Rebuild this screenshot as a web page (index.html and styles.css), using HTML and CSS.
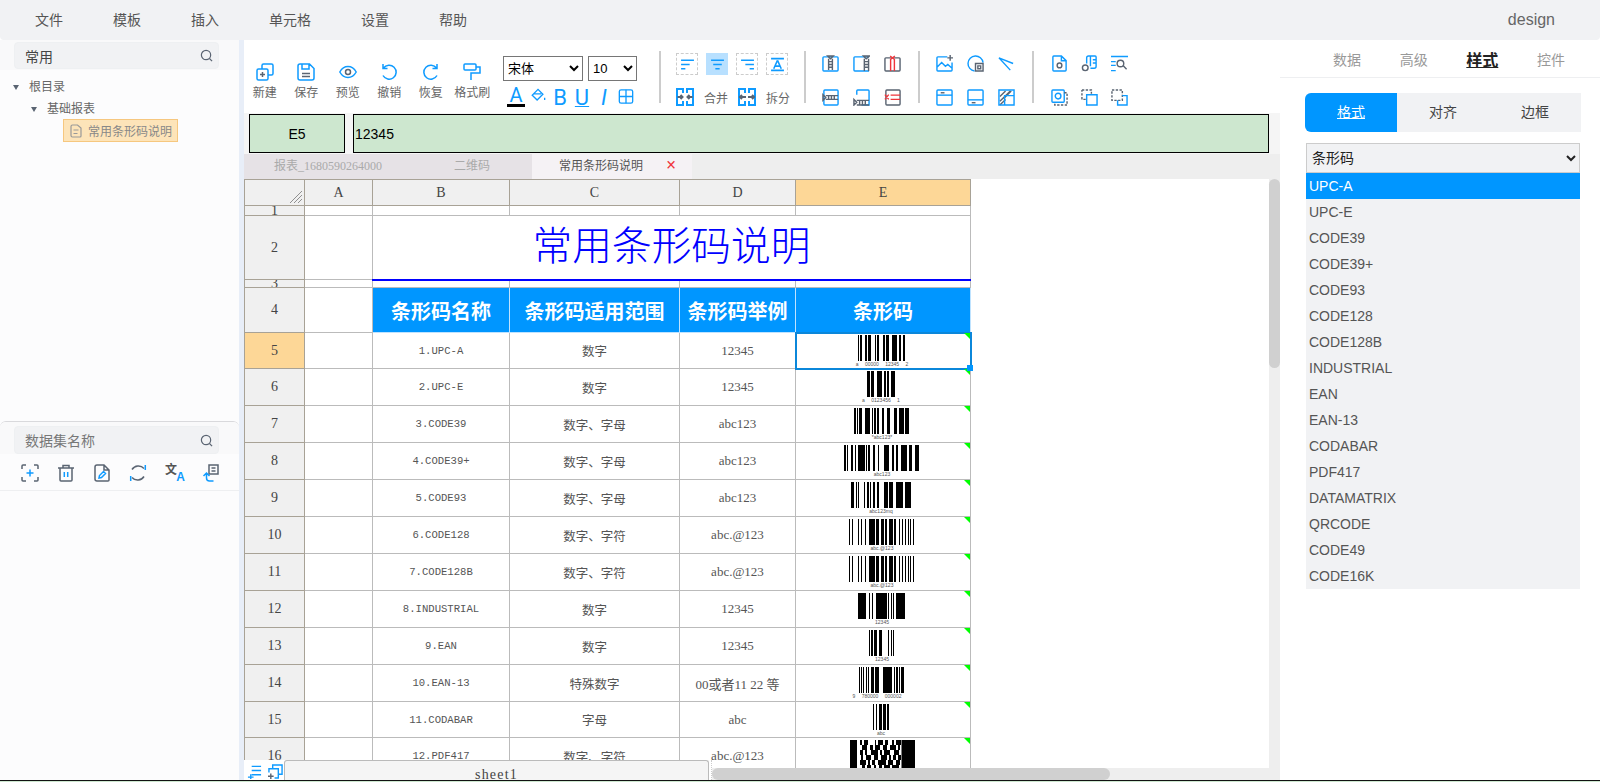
FILE: index.html
```html
<!DOCTYPE html>
<html lang="zh-CN">
<head>
  <meta charset="UTF-8" />
  <meta name="viewport" content="width=device-width, initial-scale=1.0"/>
  <title>报表设计</title>
  <link rel="stylesheet" href="styles.css">
</head>
<body>
  <div class="app">
    <header class="topbar">
      <nav class="menu">
        <span>文件</span><span>模板</span><span>插入</span><span>单元格</span><span>设置</span><span>帮助</span>
      </nav>
      <span class="user">design</span>
    </header>

    <div class="workspace">
      <aside class="left">
        <section class="tree-panel">
          <div class="search-row">
            <div class="search-box"><span class="search-value">常用</span>
              <svg class="search-ic" viewBox="0 0 14 14"><circle cx="6.5" cy="6.5" r="5"/><path d="M10.2 10.2 13 13"/></svg>
            </div>
          </div>
          <ul class="tree">
            <li class="tree-root"><i class="caret"></i>根目录</li>
            <li class="tree-folder"><i class="caret"></i>基础报表</li>
            <li class="tree-file">
              <svg class="file-ic" viewBox="0 0 12 14"><path d="M2.5 1h5L11 4v8a1 1 0 0 1-1 1H2.500a1.500 1.500 0 0 1-1.500-1.500v-9A1.500 1.500 0 0 1 2.500 1zM3.500 6h5M3.500 9.500h4"/></svg>
              常用条形码说明
            </li>
          </ul>
        </section>
        <section class="data-panel">
          <div class="search-row data-search">
            <div class="search-box"><span class="search-hint">数据集名称</span>
              <svg class="search-ic" viewBox="0 0 14 14"><circle cx="6.5" cy="6.5" r="5"/><path d="M10.200 10.200 13 13"/></svg>
            </div>
          </div>
          <div class="data-tools">
            <svg class="ic" viewBox="0 0 18 18"><path class="g" d="M1 5V2a1 1 0 0 1 1-1h3M13 1h3a1 1 0 0 1 1 1v3M17 13v3a1 1 0 0 1-1 1h-3M5 17H2a1 1 0 0 1-1-1v-3"/><path d="M9 5.500v7M5.500 9h7"/></svg>
            <svg class="ic" viewBox="0 0 18 18"><path class="g" d="M1 4h16M6 4V1.500h6V4M3 4v12a1 1 0 0 0 1 1h10a1 1 0 0 0 1-1V4"/><path d="M7.300 8v5M10.700 8v5"/></svg>
            <svg class="ic" viewBox="0 0 18 18"><path class="g" d="M4 1h7l5 5v10a1 1 0 0 1-1 1H4a2 2 0 0 1-2-2V3a2 2 0 0 1 2-2zM11 1v5h5"/><path d="m6 14 .5-2.500 4-4 2 2-4 4z"/></svg>
            <svg class="ic" viewBox="0 0 18 18"><path class="g" d="M3 5.500A7.500 7.500 0 0 1 15 4.500M15 12.500A7.500 7.500 0 0 1 3 13.500"/><path d="M16.300 1v5M1.700 12v5"/></svg>
            <span class="translate"><b>文</b><em>A</em></span>
            <svg class="ic" viewBox="0 0 18 18"><path class="g" d="M8 1h9v9H8zM10.500 4h4M10.500 7h4"/><path d="M5.500 9.500v4.500a3 3 0 0 0 3 3h4M2.500 12l3-3 3 3"/></svg>
          </div>
        </section>
      </aside>
      <div class="strip"></div>

      <main class="main">
        <div class="toolbar">
          <div class="tool">
            <svg class="ic" viewBox="0 0 18 18"><rect x="1" y="6" width="11" height="11" rx="1.500"/><path class="g" d="M6.500 9v5M4 11.500h5"/><path d="M6 6V2.500A1.500 1.500 0 0 1 7.500 1h8A1.500 1.500 0 0 1 17 2.500v8a1.500 1.500 0 0 1-1.500 1.500H12"/></svg>
            <span>新建</span>
          </div>
          <div class="tool">
            <svg class="ic" viewBox="0 0 18 18"><path d="M3 1h9.500L17 5.500V15a2 2 0 0 1-2 2H3a2 2 0 0 1-2-2V3a2 2 0 0 1 2-2zM5 1v5h7V1"/><path class="g" d="M5 10.500h8M5 13.500h8"/></svg>
            <span>保存</span>
          </div>
          <div class="tool">
            <svg class="ic" viewBox="0 0 18 18"><path d="M.8 9C3 5 5.800 3.500 9 3.500S15 5 17.200 9C15 13 12.200 14.500 9 14.500S3 13 .8 9z"/><circle class="g" cx="9" cy="9" r="2.500"/></svg>
            <span>预览</span>
          </div>
          <div class="tool">
            <svg class="ic" viewBox="0 0 18 18"><path d="M3.500 5a7 7 0 1 1-.5 7.500M3 1v4.500h4.500"/></svg>
            <span>撤销</span>
          </div>
          <div class="tool">
            <svg class="ic" viewBox="0 0 18 18"><path d="M14.500 5a7 7 0 1 0 .5 7.500M15 1v4.500h-4.500"/></svg>
            <span>恢复</span>
          </div>
          <div class="tool">
            <svg class="ic" viewBox="0 0 18 18"><rect x="1" y="1" width="12" height="6" rx="1"/><path d="M13 4h4v6H8v7"/></svg>
            <span>格式刷</span>
          </div>

          <div class="font-group">
            <div class="font-selects">
              <select class="font-name"><option>宋体</option></select>
              <select class="font-size"><option>10</option></select>
            </div>
            <div class="font-styles">
              <span class="style-btn style-color">A</span>
              <svg class="ic style-ic" viewBox="0 0 18 18"><path d="M9 1 2.500 7.500 8 13l6.500-6.500zM4.500 6h8"/><path d="M16.500 10.500v2.500"/></svg>
              <span class="style-btn">B</span>
              <span class="style-btn style-under">U</span>
              <span class="style-btn style-italic">I</span>
              <svg class="ic style-ic" viewBox="0 0 18 18"><rect x="1.500" y="1.500" width="15" height="15" rx="2"/><path d="M9 1.500v15M1.500 9h15"/></svg>
            </div>
          </div>

          <i class="sep sep-a"></i>

          <div class="align-group">
            <div class="align-row">
              <span class="align-btn"><svg class="ic" viewBox="0 0 14 14"><path d="M1 3h12M1 7h8M1 11h4"/></svg></span>
              <span class="align-btn is-on"><svg class="ic" viewBox="0 0 14 14"><path d="M1 3h12M3 7h8M5 11h4"/></svg></span>
              <span class="align-btn"><svg class="ic" viewBox="0 0 14 14"><path d="M1 3h12M5 7h8M9 11h4"/></svg></span>
              <span class="align-btn"><svg class="ic" viewBox="0 0 14 14"><path d="M1 1.500h12M1 12.500h12M7 3 3.500 11M7 3l3.500 8M4.500 8.500h5"/></svg></span>
            </div>
            <div class="merge-row">
              <svg class="ic ic-heavy" viewBox="0 0 18 18"><path d="M7 5V1H1v16h6v-4M11 5V1h6v16h-6v-4"/><path class="g" d="M1.500 9h5M16.500 9h-5M4.500 7l2 2-2 2M13.500 7l-2 2 2 2"/></svg>
              <span class="merge-label">合并</span>
              <svg class="ic ic-heavy" viewBox="0 0 18 18"><path d="M7 5V1H1v16h6v-4M11 5V1h6v16h-6v-4"/><path class="g" d="M2 9h6M16 9h-6M4 7 2 9l2 2M14 7l2 2-2 2"/></svg>
              <span class="merge-label">拆分</span>
            </div>
          </div>

          <i class="sep sep-b"></i>

          <div class="icon-grid">
            <svg class="ic" viewBox="0 0 18 18"><rect x="1" y="2" width="16" height="15" rx="1"/><path class="g" d="M7 4v12M11 4v12M7 7h4M7 10h4M7 13h4M6 1h6L9 4z"/></svg>
            <svg class="ic" viewBox="0 0 18 18"><path d="M17 2H2a1 1 0 0 0-1 1v13a1 1 0 0 0 1 1h15"/><path class="g" d="M12 4v13M16.500 4v13M12 7h4.500M12 10h4.500M12 13h4.500M11 1h6.500L14 4z"/></svg>
            <svg class="ic" viewBox="0 0 18 18"><rect class="g" x="1" y="3" width="16" height="14" rx="1"/><path class="r" d="M7 5v12M11 5v12M6.500 1l5 4M11.500 1l-5 4"/></svg>
            <svg class="ic" viewBox="0 0 18 18"><rect x="2" y="1" width="15" height="16" rx="1"/><path class="g" d="M4 7h13M4 11h13M7 7v4M10 7v4M13 7v4M1 6v6l3-3z"/></svg>
            <svg class="ic" viewBox="0 0 18 18"><path d="M4 6V2a1 1 0 0 1 1-1h11a1 1 0 0 1 1 1v15H9"/><path class="g" d="M4 12h13M4 17h13M7 12v5M10 12v5M13 12v5M1 11v6l3-3z"/></svg>
            <svg class="ic" viewBox="0 0 18 18"><rect class="g" x="2" y="1" width="15" height="16" rx="1"/><path class="r" d="M7 6.500h10M7 11h10M1 6l4 5M5 6l-4 5"/></svg>
          </div>

          <i class="sep sep-c"></i>

          <div class="icon-grid">
            <svg class="ic" viewBox="0 0 18 18"><path d="M12 2H2a1 1 0 0 0-1 1v13a1 1 0 0 0 1 1h14a1 1 0 0 0 1-1V8M1 13l5-5 4 4 2.500-2 4.500 4"/><path class="g" d="M15 0v6M12 3h6"/></svg>
            <svg class="ic" viewBox="0 0 18 18"><path d="M8 17A8 8 0 1 1 17 8"/><path class="g" d="M9 9h8v8H9zM11.500 11.500h3v3h-3z"/></svg>
            <svg class="ic" viewBox="0 0 18 18"><path d="M1 3 16 9M1 3l12 13"/></svg>
            <svg class="ic" viewBox="0 0 18 18"><rect x="1" y="1" width="16" height="16" rx="1"/><path d="M1 6.500h16"/><path class="g" d="M5 4h4"/></svg>
            <svg class="ic" viewBox="0 0 18 18"><rect x="1" y="1" width="16" height="16" rx="1"/><path d="M1 11.500h16"/><path class="g" d="M5 14.500h4"/></svg>
            <svg class="ic" viewBox="0 0 18 18"><path class="g" d="M2 8 8 2M2 13 13 2M6 10l8-8M2 17l6-6"/><path d="M1 1h16v16H1zM7 7h10v10H7z"/></svg>
          </div>

          <i class="sep sep-d"></i>

          <div class="icon-grid grid-page">
            <svg class="ic" viewBox="0 0 18 18"><path d="M3 1h8l5 5v10a1 1 0 0 1-1 1H3a1 1 0 0 1-1-1V2a1 1 0 0 1 1-1zM11 1v5h5"/><circle class="g" cx="9" cy="11" r="2.500"/></svg>
            <svg class="ic" viewBox="0 0 18 18"><path d="M6 9V3a2 2 0 0 1 2-2h7a1 1 0 0 1 1 1v10a2 2 0 0 1-2 2h-4M10 1v11M12.500 5h3M12.500 8.500h3"/><circle class="g" cx="4.500" cy="13.500" r="3"/></svg>
            <svg class="ic" viewBox="0 0 18 18"><path d="M0 1.500h18M0 7h5M0 11h5M0 16.500h5"/><circle class="g" cx="10" cy="9" r="3.500"/><path class="g" d="m13 11.500 3.500 3.500"/></svg>
            <svg class="ic" viewBox="0 0 18 18"><rect x="1" y="1" width="13" height="13" rx="1"/><circle cx="7.500" cy="7.500" r="3"/><path class="g dash" d="M14 4h3v13H4v-3"/></svg>
            <svg class="ic" viewBox="0 0 18 18"><path class="g dash" d="M1 1h10v4M5 11H1V1"/><path d="M6 6h11v11H6z"/></svg>
            <svg class="ic" viewBox="0 0 18 18"><path class="g dash" d="M1 1h11v11H1z"/><path d="M12 7h5v10H7v-5"/></svg>
          </div>
        </div>

        <div class="formula">
          <div class="formula-box cell-name">E5</div>
          <div class="formula-box cell-value">12345</div>
        </div>

        <div class="doc-tabs">
          <span class="doc-tab tab-wide">报表_1680590264000</span>
          <span class="doc-tab tab-small">二维码</span>
          <span class="doc-tab tab-active">常用条形码说明<i class="tab-close">×</i></span>
        </div>

        <div class="sheet">
          <div class="viewport">
            <table class="grid">
              <colgroup>
                <col class="c0"><col class="c1"><col class="c2"><col class="c3"><col class="c4"><col class="c5">
              </colgroup>
              <thead>
                <tr class="r-head">
                  <th class="corner-cell"><svg class="slashes" viewBox="0 0 14 14"><path d="M1 13 13 1M5 13 13 5M9 13l4-4"/></svg></th>
                  <th>A</th><th>B</th><th>C</th><th>D</th><th class="is-active">E</th>
                </tr>
              </thead>
              <tbody>
                <tr class="r-1"><th>1</th><td></td><td></td><td></td><td></td><td></td></tr>
                <tr class="r-2"><th>2</th><td></td><td colspan="4" class="title">常用条形码说明</td></tr>
                <tr class="r-3"><th>3</th><td></td><td class="rule"></td><td class="rule"></td><td class="rule"></td><td class="rule"></td></tr>
                <tr class="r-4"><th>4</th><td></td><td class="head-cell">条形码名称</td><td class="head-cell">条形码适用范围</td><td class="head-cell">条形码举例</td><td class="head-cell">条形码</td></tr>
                <tr class="r-5"><th class="is-active">5</th><td></td><td class="code">1.UPC-A</td><td>数字</td><td class="val">12345</td>
                  <td class="bar mark selected"><svg class="bc" width="47" height="33"><line x2="47" y1="13" y2="13" stroke-dasharray="1 1 2 3 2 1 3 4 1 1 2 4 2 1 3 3 5 2 2 2 2"/><text class="spread" x="24" y="31">a 00000 12345 2</text></svg><i class="handle"></i></td></tr>
                <tr class="r-6"><th>6</th><td></td><td class="code">2.UPC-E</td><td>数字</td><td class="val">12345</td>
                  <td class="bar mark"><svg class="bc" width="28" height="33"><line x2="28" y1="13" y2="13" stroke-dasharray="3 1 3 3 5 2 2 1 2 2 4"/><text class="spread" x="14" y="31">a 0123456 1</text></svg></td></tr>
                <tr class="r-7"><th>7</th><td></td><td class="code">3.CODE39</td><td>数字、字母</td><td class="val">abc123</td>
                  <td class="bar mark"><svg class="bc" width="55" height="33"><line x2="55" y1="13" y2="13" stroke-dasharray="2 1 1 1 3 3 5 2 1 1 2 1 2 3 2 3 3 4 3 2 5 1 4"/><text x="28" y="31">*abc123*</text></svg></td></tr>
                <tr class="r-7"><th>8</th><td></td><td class="code">4.CODE39+</td><td>数字、字母</td><td class="val">abc123</td>
                  <td class="bar mark"><svg class="bc" width="75" height="33"><line x2="75" y1="13" y2="13" stroke-dasharray="2 1 1 3 2 2 1 2 7 1 1 1 2 3 2 3 1 5 5 3 2 2 2 3 6 2 3 3 4"/><text x="38" y="31">abc123</text></svg></td></tr>
                <tr class="r-7"><th>9</th><td></td><td class="code">5.CODE93</td><td>数字、字母</td><td class="val">abc123</td>
                  <td class="bar mark"><svg class="bc" width="60" height="33"><line x2="60" y1="13" y2="13" stroke-dasharray="3 2 1 1 1 5 1 2 2 1 1 2 2 2 2 5 4 1 4 3 7 2 6"/><text x="30" y="31">abc123mq</text></svg></td></tr>
                <tr class="r-7"><th>10</th><td></td><td class="code">6.CODE128</td><td>数字、字符</td><td class="val">abc.@123</td>
                  <td class="bar mark"><svg class="bc" width="65" height="33"><line x2="65" y1="13" y2="13" stroke-dasharray="1 2 1 5 1 2 1 3 1 3 6 1 3 2 3 1 2 2 4 1 2 3 1 2 1 2 1 2 1 1 1 2 1"/><text x="33" y="31">abc.@123</text></svg></td></tr>
                <tr class="r-7"><th>11</th><td></td><td class="code">7.CODE128B</td><td>数字、字符</td><td class="val">abc.@123</td>
                  <td class="bar mark"><svg class="bc" width="65" height="33"><line x2="65" y1="13" y2="13" stroke-dasharray="1 2 1 5 1 2 1 3 1 3 6 1 3 2 3 1 2 2 4 1 2 3 1 2 1 2 1 2 1 1 1 2 1"/><text x="33" y="31">abc.@123</text></svg></td></tr>
                <tr class="r-7"><th>12</th><td></td><td class="code">8.INDUSTRIAL</td><td>数字</td><td class="val">12345</td>
                  <td class="bar mark"><svg class="bc" width="47" height="33"><line x2="47" y1="13" y2="13" stroke-dasharray="8 3 1 2 1 3 11 1 1 2 1 1 1 2 9"/><text x="24" y="31">12345</text></svg></td></tr>
                <tr class="r-7"><th>13</th><td></td><td class="code">9.EAN</td><td>数字</td><td class="val">12345</td>
                  <td class="bar mark"><svg class="bc" width="25" height="33"><line x2="25" y1="13" y2="13" stroke-dasharray="1 1 2 1 3 2 3 6 1 2 1 1 1"/><text x="13" y="31">12345</text></svg></td></tr>
                <tr class="r-7"><th>14</th><td></td><td class="code">10.EAN-13</td><td>特殊数字</td><td class="val">00或者11 22 等</td>
                  <td class="bar mark"><svg class="bc" width="45" height="33"><line x2="45" y1="13" y2="13" stroke-dasharray="1 1 1 1 1 2 1 1 1 2 3 1 4 4 9 2 1 1 2 1 1 1 3"/><text class="spread" x="18" y="31">9 780000 000002</text></svg></td></tr>
                <tr class="r-15"><th>15</th><td></td><td class="code">11.CODABAR</td><td>字母</td><td class="val">abc</td>
                  <td class="bar mark"><svg class="bc" width="16" height="33"><line x2="16" y1="13" y2="13" stroke-dasharray="1 2 1 2 3 1 3 1 2"/><text x="8" y="31">abc</text></svg></td></tr>
                <tr class="r-7"><th>16</th><td></td><td class="code">12.PDF417</td><td>数字、字符</td><td class="val">abc.@123</td>
                  <td class="bar mark">
                    <svg class="bc pdf" width="62" height="33" viewBox="0 0 62 33">
                      <path d="M3.500 0v33M55 0v33M61.500 0v33" class="pdf-rows"/>
                      <path d="M10 2.500h2M14 2.500h4M25 2.500h1M28 2.500h5M35 2.500h3M42 2.500h2M46 2.500h5M12 7.500h5M20 7.500h3M25 7.500h5M33 7.500h4M40 7.500h6M48 7.500h2M10 12.500h3M15 12.500h2M21 12.500h7M30 12.500h2M34 12.500h6M44 12.500h5M11 17.500h2M16 17.500h5M24 17.500h4M31 17.500h6M39 17.500h2M43 17.500h3M48 17.500h3M10 22.500h6M18 22.500h2M22 22.500h3M28 22.500h8M38 22.500h5M46 22.500h4M12 27.500h3M17 27.500h4M24 27.500h2M29 27.500h3M34 27.500h6M42 27.500h7"/>
                    </svg>
                  </td></tr>
              </tbody>
            </table>
          </div>
          <div class="vscroll"><i class="vthumb"></i></div>
          <div class="hscroll"><i class="hthumb"></i></div>

          <div class="sheet-bar">
            <svg class="ic sheet-ic" viewBox="0 0 16 16"><path d="M5 2.500h10M5 7h10M5 11.500h10M1 14h6M4 11v5"/></svg>
            <svg class="ic sheet-ic" viewBox="0 0 16 16"><path d="M1 9V5h4V1h10v10h-4v4H7M5 5h6v6"/><path class="g" d="M0 13h6M3 10v6"/></svg>
            <div class="sheet-tab">sheet1</div>
          </div>
        </div>
      </main>

      <aside class="right">
        <div class="right-tabs">
          <span>数据</span><span>高级</span><span class="is-current">样式</span><span>控件</span>
        </div>
        <div class="segments">
          <span class="segment is-current">格式</span><span class="segment">对齐</span><span class="segment">边框</span>
        </div>
        <select class="code-select"><option>条形码</option></select>
        <ul class="code-list">
          <li class="is-current">UPC-A</li>
          <li>UPC-E</li>
          <li>CODE39</li>
          <li>CODE39+</li>
          <li>CODE93</li>
          <li>CODE128</li>
          <li>CODE128B</li>
          <li>INDUSTRIAL</li>
          <li>EAN</li>
          <li>EAN-13</li>
          <li>CODABAR</li>
          <li>PDF417</li>
          <li>DATAMATRIX</li>
          <li>QRCODE</li>
          <li>CODE49</li>
          <li>CODE16K</li>
        </ul>
      </aside>
    </div>
  </div>
  <div class="page-edge"></div>
</body>
</html>
```

FILE: styles.css
```css
* {
  box-sizing: border-box;
}

html, body {
  margin: 0;
  padding: 0;
  height: 782px;
  overflow: hidden;
}

body {
  font-family: "Liberation Sans", "Noto Sans CJK SC", sans-serif;
  font-size: 12px;
  color: #555;
  background: #fff;
}

ul {
  list-style: none;
  margin: 0;
  padding: 0;
}

.app {
  height: 780px;
  display: flex;
  flex-direction: column;
}

.page-edge {
  height: 2px;
  border-top: 1px solid #111;
  background: #cde7cf;
}

/* top menu */
.topbar {
  height: 40px;
  flex: none;
  display: flex;
  justify-content: space-between;
  align-items: center;
  padding: 0 45px 0 35px;
  background: #f1f2f4;
  border-radius: 0 0 4px 4px;
}

.menu {
  display: flex;
  gap: 50px;
  padding-bottom: 2px;
  font-size: 14px;
  color: #555;
}

.user {
  font-size: 16px;
  color: #666;
}

.workspace {
  flex: 1;
  min-height: 0;
  display: flex;
}

/* left side */
.left {
  width: 239px;
  flex: none;
  display: flex;
  flex-direction: column;
  background: #fcfcfd;
}

.tree-panel {
  height: 381px;
  flex: none;
}

.search-row {
  height: 30px;
  padding: 2px 20px 1px 14px;
  background: #f9f9fa;
}

.search-box {
  height: 27px;
  padding: 0 5px 0 10px;
  display: flex;
  align-items: center;
  justify-content: space-between;
  background: #f1f2f4;
  border: 1px solid #eef0f2;
  border-radius: 4px;
  font-size: 14px;
}

.search-value {
  color: #444;
}

.search-hint {
  color: #777;
}

.search-ic {
  width: 13px;
  height: 13px;
  fill: none;
  stroke: #5a6472;
  stroke-width: 1.3;
}

.tree {
  padding-top: 6px;
  color: #666;
}

.tree-root,
.tree-folder {
  height: 22px;
  line-height: 22px;
  display: flex;
  align-items: center;
}

.tree-root {
  padding-left: 13px;
}

.tree-folder {
  padding-left: 31px;
}

.caret {
  width: 0;
  height: 0;
  margin-right: 10px;
  border: 3.5px solid transparent;
  border-top: 5px solid #5a6472;
  border-bottom: 0;
}

.tree-file {
  width: 115px;
  height: 23px;
  margin: -1px 0 0 63px;
  padding-left: 6px;
  display: flex;
  align-items: center;
  gap: 6px;
  color: #888;
  background: #fde4b9;
  border: 1px solid #f6c77f;
}

.file-ic {
  width: 12px;
  height: 14px;
  fill: none;
  stroke: #999;
  stroke-width: 1.2;
}

.data-panel {
  flex: 1;
  border-top: 1px solid #d9d9dc;
  border-radius: 6px 6px 0 0;
}

.data-search {
  height: 32px;
  padding-top: 4px;
  padding-bottom: 0;
  border-radius: 6px 6px 0 0;
}

.data-search .search-box {
  height: 28px;
}

.data-tools {
  height: 37px;
  padding: 2px 0 0 21px;
  display: flex;
  align-items: center;
  gap: 18px;
  border-bottom: 1px solid #eeeff1;
}

.strip {
  width: 5px;
  flex: none;
  background: #e8eef8;
}

/* icons */
.ic {
  width: 18px;
  height: 18px;
  flex: none;
  fill: none;
  stroke: #0f9bff;
  stroke-width: 1.5;
}

.ic .g {
  stroke: #5a6472;
}

.ic .r {
  stroke: #f0353b;
}

.ic .dash {
  stroke-dasharray: 2.500 1.500;
}

.ic-heavy {
  stroke-width: 2;
}

.translate {
  width: 18px;
  height: 18px;
  position: relative;
  flex: none;
  line-height: 1;
}

.translate b {
  font-size: 12px;
  font-weight: 700;
  color: #555;
}

.translate em {
  position: absolute;
  right: -2px;
  bottom: -1px;
  font-size: 12px;
  font-style: normal;
  font-weight: 700;
  color: #0f9bff;
}

/* toolbar */
.main {
  flex: 1;
  min-width: 0;
  display: flex;
  flex-direction: column;
}

.toolbar {
  height: 73px;
  flex: none;
  display: flex;
  align-items: flex-start;
  padding-top: 11px;
  background: #fff;
}

.tool {
  width: 41.500px;
  flex: none;
  padding-top: 12px;
  display: flex;
  flex-direction: column;
  align-items: center;
  gap: 6px;
  color: #666;
  line-height: 13px;
}

.font-group {
  width: 134px;
  flex: none;
  margin-left: 10px;
  padding-top: 5px;
}

.font-selects {
  display: flex;
  gap: 5px;
}

.font-name,
.font-size {
  height: 25px;
  font-family: "Liberation Sans", "Noto Sans CJK SC", sans-serif;
  font-size: 13px;
  color: #000;
  background: #fff;
}

.font-name {
  width: 80px;
}

.font-size {
  width: 49px;
}

.font-styles {
  margin-top: 7px;
  padding-left: 2px;
  display: flex;
  width: 134px;
}

.style-btn {
  width: 22px;
  height: 19px;
  text-align: center;
  font-family: Roboto, "Liberation Sans", sans-serif;
  font-size: 22px;
  font-weight: 400;
  line-height: 19px;
  color: #0f9bff;
}

.style-color {
  width: 18px;
  margin: 0 2px;
  line-height: 15px;
  font-size: 20px;
  border-bottom: 3px solid #000;
}

.style-under {
  text-decoration: underline;
  text-decoration-thickness: 1px;
  text-underline-offset: 1px;
}

.style-italic {
  font-style: italic;
}

.style-ic {
  width: 16px;
  height: 17px;
  margin: 0 3px;
}

.sep {
  width: 2px;
  height: 52px;
  flex: none;
  background: #ccc;
}

.sep-a {
  margin: 0 15px 0 22px;
}

.sep-b {
  margin: 0 16px 0 14px;
}

.sep-c {
  margin: 0 16px 0 17px;
}

.sep-d {
  margin: 0 17px 0 17px;
}

.align-group {
  width: 114px;
  flex: none;
  padding-top: 2px;
}

.align-row {
  display: flex;
  gap: 8px;
}

.align-btn {
  width: 22px;
  height: 22px;
  display: flex;
  align-items: center;
  justify-content: center;
  border: 1px dashed #ccc;
}

.align-btn .ic {
  width: 15px;
  height: 15px;
}

.align-btn.is-on {
  background: #b8e0ff;
  border-color: #b8e0ff;
}

.merge-row {
  margin-top: 13px;
  display: flex;
  align-items: center;
  color: #666;
}

.merge-label {
  width: 44px;
  flex: none;
  padding-left: 10px;
}

.icon-grid {
  flex: none;
  padding-top: 4px;
  display: grid;
  grid-template-columns: repeat(3, 17px);
  column-gap: 14px;
  row-gap: 17px;
}

.icon-grid .ic {
  width: 17px;
  height: 17px;
}

.grid-page {
  column-gap: 13px;
}

/* formula bar */
.formula {
  height: 41px;
  flex: none;
  display: flex;
  gap: 8px;
  padding: 1px 11px 0 5px;
  background: #f5f5f5;
  font-size: 14px;
  color: #000;
}

.formula-box {
  height: 39px;
  background: #cde7cf;
  border: 1px solid #000;
  line-height: 38px;
}

.cell-name {
  width: 96px;
  text-align: center;
}

.cell-value {
  flex: 1;
  padding-left: 1px;
}

/* document tabs */
.doc-tabs {
  height: 25px;
  flex: none;
  display: flex;
  background: #eee;
  font-family: "Liberation Serif", "Noto Sans CJK SC", serif;
}

.doc-tab {
  text-align: center;
  line-height: 25px;
  color: #aaa;
  background: #e6e2e6;
}

.tab-wide {
  width: 168px;
}

.tab-small {
  width: 120px;
}

.tab-active {
  width: 160px;
  padding-left: 27px;
  text-align: left;
  color: #555;
  background: #f5f2f5;
}

.tab-close {
  margin-left: 23px;
  font-style: normal;
  font-size: 18px;
  font-weight: 700;
  line-height: 1;
  color: #f0353b;
  vertical-align: -1px;
}

/* sheet */
.sheet {
  flex: 1;
  min-height: 0;
  position: relative;
  display: grid;
  grid-template-columns: 1fr 11px;
  grid-template-rows: 1fr 12px;
}

.viewport {
  overflow: hidden;
  min-height: 0;
}

.vscroll {
  grid-row: 1 / 3;
  grid-column: 2;
  background: #eee;
}

.vthumb {
  display: block;
  height: 189px;
  background: #d0d0d0;
  border-radius: 6px;
}

.hscroll {
  padding-left: 468px;
  background: #eee;
}

.hthumb {
  display: block;
  width: 398px;
  height: 12px;
  background: #d0d0d0;
  border-radius: 6px;
}

.grid {
  width: 726px;
  table-layout: fixed;
  border-collapse: collapse;
  font-family: "Liberation Serif", "Noto Sans CJK SC", serif;
  font-size: 12.500px;
  color: #555;
}

.c0 { width: 60px; }
.c1 { width: 68px; }
.c2 { width: 137px; }
.c3 { width: 170px; }
.c4 { width: 116px; }
.c5 { width: 175px; }

.grid th,
.grid td {
  padding: 0;
  text-align: center;
  overflow: hidden;
}

.grid td {
  border: 1px solid #bbb;
}

.grid th {
  font-size: 14px;
  font-weight: 400;
  color: #444;
  background: #f0f0f0;
  border: 1px solid #a8a296;
}

.grid th.is-active {
  background: #fdd797;
}

.r-head { height: 26px; }
.r-1 { height: 9px; line-height: 9px; }
.r-2 { height: 64px; }
.r-3 { height: 7px; line-height: 7px; }
.r-4 { height: 45px; }
.r-5 { height: 33px; }
.r-6 { height: 37px; }
.r-7 { height: 37px; }
.r-15 { height: 36px; }

.corner-cell {
  position: relative;
}

.slashes {
  position: absolute;
  right: 1px;
  bottom: 1px;
  width: 14px;
  height: 14px;
  fill: none;
  stroke: #777;
  stroke-width: .8;
}

.grid td.title {
  font-size: 39.700px;
  line-height: 60px;
  color: #00f;
  border-bottom: 0;
  font-weight: 300;
}

.grid td.rule {
  border-top: 2px solid #00f;
}

.grid td.head-cell {
  font-size: 20px;
  font-weight: 700;
  color: #fff;
  background: #0096ff;
  border-color: #bfe3ff;
  border-top: 0;
}

.grid td.code {
  font-family: "Liberation Mono", "Noto Sans CJK SC", monospace;
  font-size: 10.600px;
}

.grid td.val {
  font-size: 13px;
}

.grid td.bar {
  position: relative;
  padding: 2px 4px 0 0;
  vertical-align: top;
  overflow: visible;
}

.grid td.mark::after {
  content: "";
  position: absolute;
  top: 0;
  right: 0;
  border-top: 6px solid #0f0;
  border-left: 6px solid transparent;
}

.grid td.selected {
  outline: 2px solid #0b87da;
  outline-offset: -1px;
}

.handle {
  position: absolute;
  right: -3px;
  bottom: -3px;
  width: 6px;
  height: 6px;
  background: #0096ff;
  z-index: 1;
}

.bc {
  display: block;
  margin: 0 auto;
  overflow: visible;
}

.bc line {
  stroke: #000;
  stroke-width: 26;
}

.bc text {
  font-family: "Liberation Sans", sans-serif;
  font-size: 5px;
  text-anchor: middle;
  fill: #555;
}

.bc .spread {
  word-spacing: 5px;
}

.pdf path {
  fill: none;
  stroke: #000;
  stroke-width: 5;
}

.pdf .pdf-rows {
  stroke-width: 7;
}

/* sheet tabs sit over the bottom of the grid */
.sheet-bar {
  position: absolute;
  left: 0;
  bottom: 0;
  width: 468px;
  height: 20px;
  display: flex;
  align-items: flex-start;
  padding: 4px 0 0 3px;
  background: #fff;
  border-right: 1px dotted #ccc;
}

.sheet-ic {
  width: 15px;
  height: 15px;
  margin-right: 6px;
}

.sheet-ic + .sheet-ic {
  margin-right: 2px;
}

.sheet-tab {
  position: absolute;
  left: 40px;
  right: 2px;
  top: 0;
  bottom: 0;
  text-align: center;
  line-height: 27px;
  font-family: "Liberation Serif", serif;
  font-size: 14px;
  letter-spacing: 1.200px;
  color: #444;
  background: #f5f5f5;
  border: 1px solid #bbb;
  border-bottom: 0;
  border-radius: 3px 3px 0 0;
  overflow: hidden;
}

/* right side */
.right {
  width: 320px;
  flex: none;
  background: #fff;
}

.right-tabs {
  height: 38px;
  padding: 0 35px 0 53px;
  display: flex;
  align-items: center;
  justify-content: space-between;
  font-size: 14px;
  color: #999;
  border-bottom: 1px solid #eeeff1;
}

.right-tabs .is-current {
  font-size: 16px;
  font-weight: 700;
  color: #222;
  text-decoration: underline;
}

.segments {
  width: 276px;
  height: 39px;
  margin: 15px 0 0 25px;
  display: flex;
  background: #f1f2f4;
  border-radius: 6px 0 0 6px;
  font-size: 14px;
  color: #444;
}

.segment {
  flex: 1;
  text-align: center;
  line-height: 39px;
}

.segment.is-current {
  color: #fff;
  background: #0096ff;
  border-radius: 6px 0 0 6px;
  text-decoration: underline;
}

.code-select {
  display: block;
  width: 274px;
  height: 30px;
  margin: 11px 0 0 26px;
  padding-left: 1px;
  font-family: "Liberation Sans", "Noto Sans CJK SC", sans-serif;
  font-size: 14px;
  color: #222;
  background: #f1f2f4;
  border: 1px solid #ccc;
}

.code-list {
  width: 274px;
  margin-left: 26px;
  font-size: 14px;
  color: #555;
  background: #f1f2f4;
}

.code-list li {
  height: 26px;
  line-height: 26px;
  padding-left: 3px;
}

.code-list .is-current {
  color: #fff;
  background: #0096ff;
}
```
